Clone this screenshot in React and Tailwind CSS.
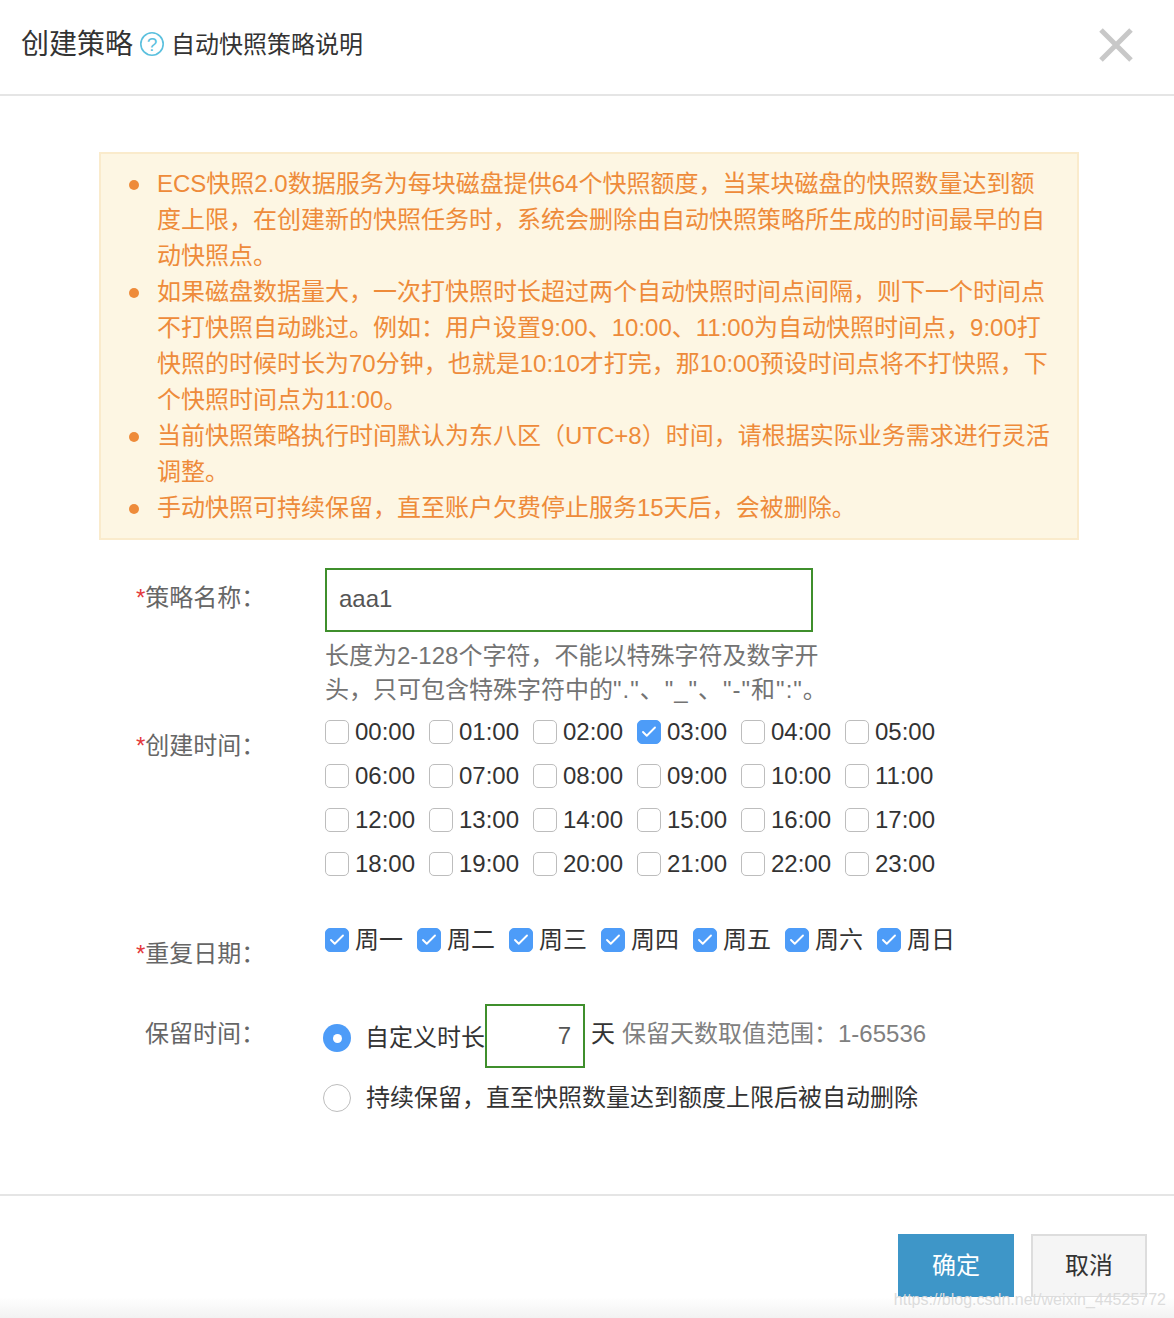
// App.jsx — create snapshot policy dialog
import { Check } from 'lucide-react';

const HOURS = Array.from({ length: 24 }, (_, i) => `${String(i).padStart(2, '0')}:00`);
const DAYS = ['周一', '周二', '周三', '周四', '周五', '周六', '周日'];

const NOTES = [
  ['ECS快照2.0数据服务为每块磁盘提供64个快照额度，当某块磁盘的快照数量达到额', '度上限，在创建新的快照任务时，系统会删除由自动快照策略所生成的时间最早的自', '动快照点。'],
  ['如果磁盘数据量大，一次打快照时长超过两个自动快照时间点间隔，则下一个时间点', '不打快照自动跳过。例如：用户设置9:00、10:00、11:00为自动快照时间点，9:00打', '快照的时候时长为70分钟，也就是10:10才打完，那10:00预设时间点将不打快照，下', '个快照时间点为11:00。'],
  ['当前快照策略执行时间默认为东八区（UTC+8）时间，请根据实际业务需求进行灵活', '调整。'],
  ['手动快照可持续保留，直至账户欠费停止服务15天后，会被删除。'],
];

function Box({ checked }) {
  return (
    <span
      className={`flex h-6 w-6 shrink-0 items-center justify-center rounded-[5px] border ${
        checked ? 'border-[#4d9cf8] bg-[#4d9cf8]' : 'border-[#bdbdbd] bg-white'
      }`}
    >
      {checked && <Check size={18} strokeWidth={2.5} className="text-white" />}
    </span>
  );
}

function Label({ star, children }) {
  return (
    <div className="w-[250px] shrink-0 pl-[136px] whitespace-nowrap text-[24px] text-[#666666]">
      {star ? <span className="text-[#e4393c]">*</span> : <span className="inline-block w-[9px]" />}
      {children}
    </div>
  );
}

export default function App() {
  return (
    <div className="relative h-[1318px] w-[1174px] overflow-hidden bg-white font-['Liberation_Sans','Noto_Sans_CJK_SC',sans-serif] text-[#333333]">
      {/* Header */}
      <div className="flex h-[96px] items-center justify-between border-b-2 border-[#e5e5e5] pr-[40px] pl-[21px]">
        <div className="flex items-center pb-1">
          <span className="text-[28px] leading-none">创建策略</span>
          <svg width="26" height="26" viewBox="0 0 26 26" className="mr-[6px] mb-[3px] ml-[6px]">
            <circle cx="13" cy="13" r="11.2" fill="none" stroke="#5bc0de" strokeWidth="1.6" />
            <text x="13" y="20" textAnchor="middle" fontSize="19" fill="#5bc0de">?</text>
          </svg>
          <span className="text-[24px] leading-none">自动快照策略说明</span>
        </div>
        <svg width="36" height="36" viewBox="0 0 36 36" className="mb-[4px]">
          <path d="M3 3 L33 33 M33 3 L3 33" stroke="#c8c8c8" strokeWidth="5" />
        </svg>
      </div>

      {/* Notice */}
      <div className="mt-[56px] mr-[95px] ml-[99px] border-2 border-[#faebcc] bg-[#fdf6e3] py-[12px] pl-[56px] text-[24px] leading-[36px] text-[#ee8b3a]">
        {NOTES.map((lines) => (
          <div key={lines[0]} className="relative whitespace-nowrap">
            <span className="absolute top-[14px] -left-[28px] h-[10px] w-[10px] rounded-full bg-[#ee8b3a]" />
            {lines.map((line) => (
              <div key={line}>{line}</div>
            ))}
          </div>
        ))}
      </div>

      {/* Name */}
      <div className="mt-[28px] flex">
        <div className="pt-[12px]">
          <Label star>策略名称：</Label>
        </div>
        <div className="ml-[75px]">
          <div className="flex h-[64px] w-[488px] items-center border-2 border-[#3f8f2c] pb-[2px] pl-[12px] text-[24px] text-[#555555]">aaa1</div>
          <div className="mt-[7px] w-[510px] text-[24px] leading-[34px] text-[#737373]">
            <div className="whitespace-nowrap">长度为2-128个字符，不能以特殊字符及数字开</div>
            <div className="whitespace-nowrap">
              头，只可包含特殊字符中的<span className="tracking-[1px]">"."、"_"、"-"和":"。</span>
            </div>
          </div>
        </div>
      </div>

      {/* Hours */}
      <div className="mt-[1px] flex">
        <div className="pt-[20px]">
          <Label star>创建时间：</Label>
        </div>
        <div className="ml-[75px] grid grid-cols-[repeat(6,104px)] gap-y-[16px] pt-[10px]">
          {HOURS.map((h) => (
            <label key={h} className="flex h-[28px] items-center gap-[6px] text-[24px] text-[#333333]">
              <Box checked={h === '03:00'} />
              {h}
            </label>
          ))}
        </div>
      </div>

      {/* Days */}
      <div className="mt-[48px] flex">
        <div className="pt-[10px]">
          <Label star>重复日期：</Label>
        </div>
        <div className="ml-[75px] flex">
          {DAYS.map((d) => (
            <label key={d} className="flex h-[28px] w-[92px] items-center gap-[6px] text-[24px]">
              <Box checked />
              {d}
            </label>
          ))}
        </div>
      </div>

      {/* Retention */}
      <div className="mt-[32px] flex">
        <div className="pt-[12px]">
          <Label>保留时间：</Label>
        </div>
        <div className="ml-[73px]">
          <div className="flex items-center">
            <span className="mt-[4px] flex h-[28px] w-[28px] items-center justify-center rounded-full bg-[#4d9cf8]">
              <span className="h-[9px] w-[9px] rounded-full bg-white" />
            </span>
            <span className="mt-[4px] ml-[14px] text-[24px]">自定义时长</span>
            <div className="flex h-[64px] w-[100px] items-center justify-end border-2 border-[#3f8f2c] pr-[12px] text-[24px] text-[#555555]">7</div>
            <span className="mb-[4px] ml-[6px] text-[24px]">天</span>
            <span className="mb-[4px] ml-[7px] text-[24px] text-[#808080]">保留天数取值范围：1-65536</span>
          </div>
          <div className="mt-[12px] flex items-center">
            <span className="h-[28px] w-[28px] rounded-full border border-[#bdbdbd]" />
            <span className="ml-[15px] text-[24px] whitespace-nowrap">持续保留，直至快照数量达到额度上限后被自动删除</span>
          </div>
        </div>
      </div>

      {/* Footer */}
      <div className="mt-[78px] flex justify-end gap-[17px] border-t-2 border-[#e5e5e5] pt-[38px] pr-[27px]">
        <button className="h-[64px] w-[116px] bg-[#3e96c8] text-[24px] text-white">确定</button>
        <button className="h-[64px] w-[116px] border-2 border-[#dddddd] bg-[#f5f5f5] text-[24px] text-[#333333]">取消</button>
      </div>

      {/* Screenshot fade and watermark */}
      <div className="pointer-events-none absolute right-0 bottom-0 left-0 h-[21px] bg-gradient-to-b from-white to-[#f2f2f2]" />
      <div className="pointer-events-none absolute right-[8px] bottom-[10px] text-[16px] leading-none text-[#dcdcdc]">https://blog.csdn.net/weixin_44525772</div>
    </div>
  );
}
